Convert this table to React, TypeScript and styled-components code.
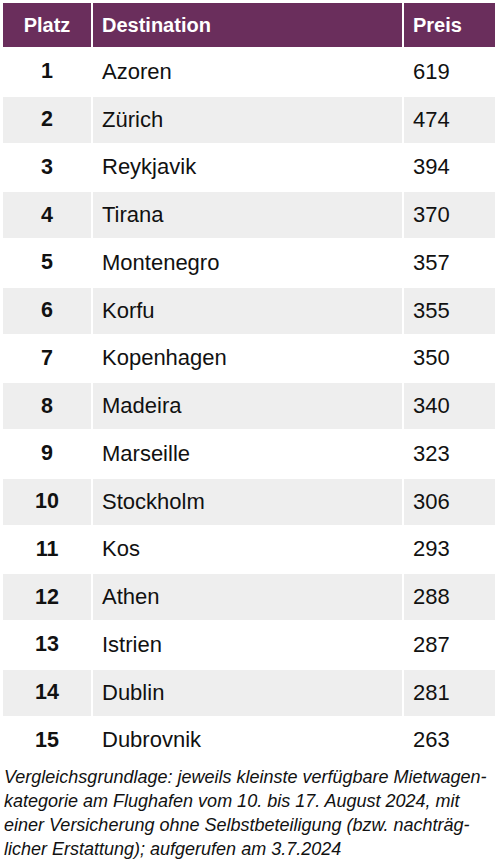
import React from 'react'
import styled, { createGlobalStyle } from 'styled-components'

const GlobalStyle = createGlobalStyle`
  body {
    margin: 0;
    background: #ffffff;
    font-family: "Liberation Sans", Arial, sans-serif;
    color: #111111;
  }
`

const rows = [
  { rank: 1, city: 'Azoren', price: 619 },
  { rank: 2, city: 'Zürich', price: 474 },
  { rank: 3, city: 'Reykjavik', price: 394 },
  { rank: 4, city: 'Tirana', price: 370 },
  { rank: 5, city: 'Montenegro', price: 357 },
  { rank: 6, city: 'Korfu', price: 355 },
  { rank: 7, city: 'Kopenhagen', price: 350 },
  { rank: 8, city: 'Madeira', price: 340 },
  { rank: 9, city: 'Marseille', price: 323 },
  { rank: 10, city: 'Stockholm', price: 306 },
  { rank: 11, city: 'Kos', price: 293 },
  { rank: 12, city: 'Athen', price: 288 },
  { rank: 13, city: 'Istrien', price: 287 },
  { rank: 14, city: 'Dublin', price: 281 },
  { rank: 15, city: 'Dubrovnik', price: 263 },
]

const App = () => {
  return (
    <Page>
      <GlobalStyle />
      <Table>
        <colgroup>
          <col style={{ width: 88 }} />
          <col style={{ width: 309 }} />
          <col style={{ width: 91 }} />
        </colgroup>
        <thead>
          <tr>
            <HeadCell $center>Platz</HeadCell>
            <HeadCell>Destination</HeadCell>
            <HeadCell>Preis</HeadCell>
          </tr>
        </thead>
        <tbody>
          {rows.map((r) => (
            <Row key={r.rank} $shaded={r.rank % 2 === 0}>
              <RankCell>{r.rank}</RankCell>
              <Cell>{r.city}</Cell>
              <Cell>{r.price}</Cell>
            </Row>
          ))}
        </tbody>
      </Table>
      <Note>
        Vergleichsgrundlage: jeweils kleinste verfügbare Mietwagen-
        <br />
        kategorie am Flughafen vom 10. bis 17. August 2024, mit
        <br />
        einer Versicherung ohne Selbstbeteiligung (bzw. nachträg-
        <br />
        licher Erstattung); aufgerufen am 3.7.2024
      </Note>
    </Page>
  )
}

const Page = styled.div`
  width: 498px;
  padding: 1px 1px 0 1px;
  box-sizing: border-box;
`

const Table = styled.table`
  width: 496px;
  border-collapse: separate;
  border-spacing: 2px;
  table-layout: fixed;
`

const HeadCell = styled.th<{ $center?: boolean }>`
  height: 44px;
  padding: 0 0 0 ${(p) => (p.$center ? '0' : '9px')};
  background-color: #6a2e5c;
  color: #ffffff;
  font-size: 20px;
  font-weight: bold;
  text-align: ${(p) => (p.$center ? 'center' : 'left')};
  vertical-align: middle;
`

const Row = styled.tr<{ $shaded: boolean }>`
  background-color: ${(p) => (p.$shaded ? '#eeeeee' : '#ffffff')};
`

const Cell = styled.td`
  height: 45.75px;
  padding: 0 0 0 9px;
  font-size: 22px;
  text-align: left;
  vertical-align: middle;
  background-color: inherit;
`

const RankCell = styled(Cell)`
  padding: 0;
  font-size: 21.5px;
  font-weight: bold;
  text-align: center;
`

const Note = styled.p`
  margin: 0;
  padding: 0 0 0 3px;
  font-size: 18px;
  line-height: 24px;
  font-style: italic;
  color: #111111;
  white-space: nowrap;
`

export default App
